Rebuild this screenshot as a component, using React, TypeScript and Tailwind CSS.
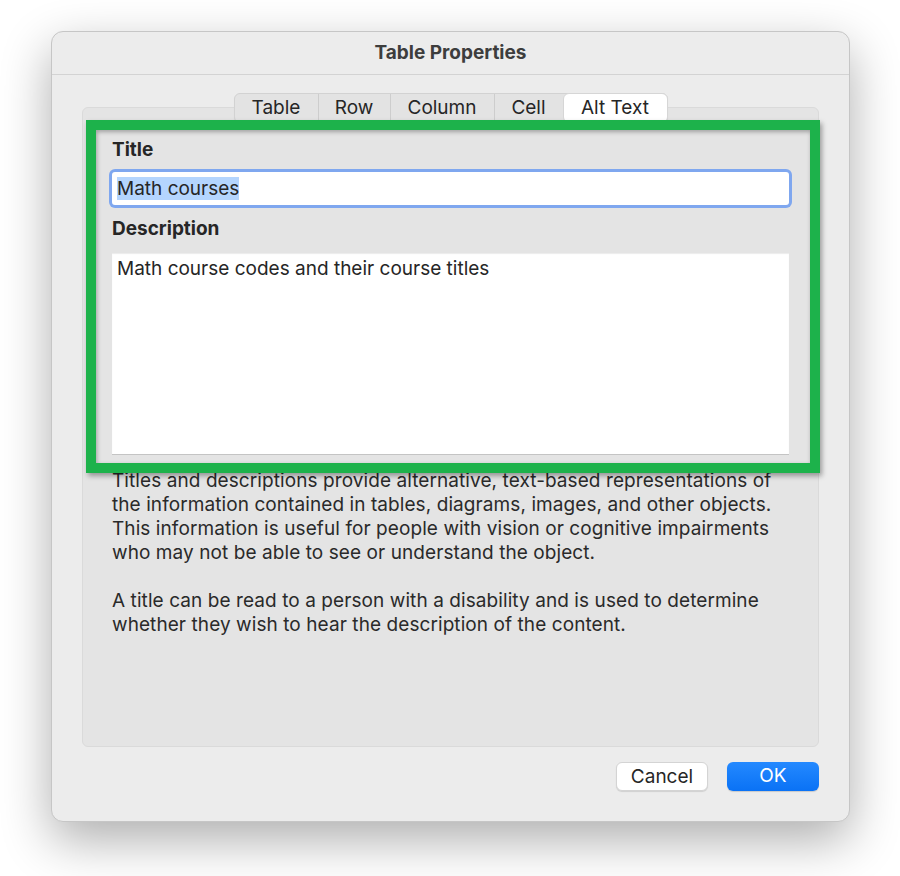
import React from "react";

const tabs = [
  { label: "Table", w: "w-[84px]" },
  { label: "Row", w: "w-[72px]" },
  { label: "Column", w: "w-[104px]" },
  { label: "Cell", w: "w-[68px]" },
  { label: "Alt Text", w: "w-[105px]", active: true },
];

export default function App() {
  return (
    <div className="min-h-[876px] w-[900px] bg-white pt-[31px] pl-[51px] font-['Inter','Liberation_Sans',sans-serif] text-[#262626]">
      <div className="relative flex h-[791px] w-[799px] flex-col rounded-[12px] border border-[#c6c6c6] bg-[#ececec] shadow-[0_18px_50px_rgba(0,0,0,0.32)]">
        {/* title bar */}
        <div className="flex h-[43px] shrink-0 items-center justify-center border-b border-[#d3d3d3] pt-px text-[19px] font-bold text-[#3d3d3d]">
          Table Properties
        </div>

        <div className="flex flex-col px-[30px] pt-[18px]">
          {/* segmented tabs */}
          <div className="relative z-10 flex h-[30px] self-center rounded-[6px] border border-[#d2d2d2] bg-[#e3e3e3] text-[19px] text-[#262626] shadow-[0_1px_1px_rgba(0,0,0,0.06)]">
            {tabs.map((t, i) => (
              <div
                key={t.label}
                className={
                  t.active
                    ? `${t.w} flex items-center justify-center rounded-[6px] border border-[#d6d6d6] bg-white -my-px -mr-px`
                    : `${t.w} flex items-center justify-center ${i < 3 ? "border-r border-[#cdcdcd]" : ""}`
                }
              >
                {t.label}
              </div>
            ))}
          </div>

          {/* panel */}
          <div className="-mt-[16px] flex h-[640px] flex-col rounded-[6px] border border-[#dadada] bg-[#e4e4e4] px-[29px] pt-[30px]">
            <div className="h-[24px] text-[19px] leading-[24px] font-bold">Title</div>
            <div className="mt-[10px] h-[33px] rounded-[3px] bg-white px-[5px] text-[19px] leading-[33px] ring-[3px] ring-[#7fa7ef]">
              <span className="bg-[#b4d5fe]">Math courses</span>
            </div>
            <div className="mt-[12px] h-[24px] text-[19px] leading-[24px] font-bold">Description</div>
            <div className="mt-[12px] h-[202px] border-b border-[#c4c4c4] bg-white px-[5px] pt-[4px] text-[19px] leading-[24px] shadow-[inset_0_1px_1px_rgba(0,0,0,0.08)]">
              Math course codes and their course titles
            </div>
            <p className="mt-[14px] whitespace-nowrap text-[19px] leading-[24px] tracking-[0.08px] text-[#2a2a2a]">
              Titles and descriptions provide alternative, text-based representations of
              <br />
              the information contained in tables, diagrams, images, and other objects.
              <br />
              This information is useful for people with vision or cognitive impairments
              <br />
              who may not be able to see or understand the object.
              <br />
              <br />
              A title can be read to a person with a disability and is used to determine
              <br />
              whether they wish to hear the description of the content.
            </p>
          </div>

          {/* buttons */}
          <div className="mt-[15px] flex justify-end gap-[19px]">
            <button className="h-[29px] w-[92px] rounded-[6px] border border-[#d4d4d4] bg-white text-[19px] text-[#262626] shadow-[0_1px_1px_rgba(0,0,0,0.12)]">
              Cancel
            </button>
            <button className="h-[29px] w-[92px] rounded-[6px] bg-[linear-gradient(#2489ff,#0a72f5)] text-[19px] text-white shadow-[0_1px_1px_rgba(0,0,0,0.15)]">
              OK
            </button>
          </div>
        </div>

        {/* green highlight annotation */}
        <div className="pointer-events-none absolute left-[34px] top-[88px] z-20 h-[353px] w-[734px] border-[10px] border-[#1db24b] shadow-[2px_3px_5px_rgba(0,0,0,0.35),inset_1px_2px_4px_rgba(0,0,0,0.3)]" />
      </div>
    </div>
  );
}
